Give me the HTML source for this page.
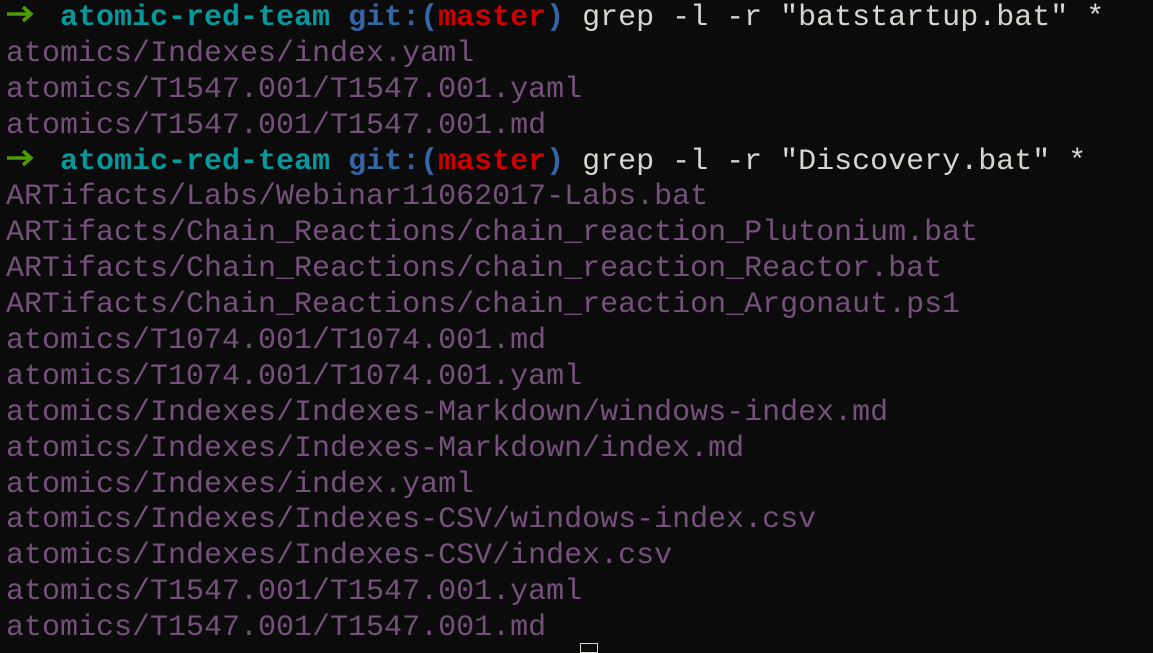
<!DOCTYPE html>
<html><head><meta charset="utf-8"><style>
html,body{margin:0;padding:0;background:#0b0b0b;width:1153px;height:649px;overflow:hidden}
.t{position:absolute;left:6px;top:1px;font-family:"Liberation Mono","DejaVu Sans Mono",monospace;font-size:30px;color:#d3d7cf}
.t div{height:35.9px;line-height:35.9px;white-space:pre;overflow:visible}
.c{color:#06989a;font-weight:bold}.b{color:#3465a4;font-weight:bold}.r{color:#cc0000;font-weight:bold}.p{color:#75507b}
.ar{display:inline-block;width:54px;height:20px;vertical-align:middle;position:relative;top:-3px}
.cur{position:absolute;left:580px;top:643px;width:18px;height:10px;border:1px solid #d3d7cf;box-sizing:border-box}
</style></head><body>
<div class="t">
<div><svg class="ar" viewBox="0 0 54 20"><path d="M1 10H24M17 3L25 10L17 17" stroke="#4e9a06" stroke-width="3.5" fill="none"/></svg><span class="c">atomic-red-team</span> <span class="b">git:(</span><span class="r">master</span><span class="b">)</span> grep -l -r "batstartup.bat" *</div>
<div class="p">atomics/Indexes/index.yaml</div>
<div class="p">atomics/T1547.001/T1547.001.yaml</div>
<div class="p">atomics/T1547.001/T1547.001.md</div>
<div><svg class="ar" viewBox="0 0 54 20"><path d="M1 10H24M17 3L25 10L17 17" stroke="#4e9a06" stroke-width="3.5" fill="none"/></svg><span class="c">atomic-red-team</span> <span class="b">git:(</span><span class="r">master</span><span class="b">)</span> grep -l -r "Discovery.bat" *</div>
<div class="p">ARTifacts/Labs/Webinar11062017-Labs.bat</div>
<div class="p">ARTifacts/Chain_Reactions/chain_reaction_Plutonium.bat</div>
<div class="p">ARTifacts/Chain_Reactions/chain_reaction_Reactor.bat</div>
<div class="p">ARTifacts/Chain_Reactions/chain_reaction_Argonaut.ps1</div>
<div class="p">atomics/T1074.001/T1074.001.md</div>
<div class="p">atomics/T1074.001/T1074.001.yaml</div>
<div class="p">atomics/Indexes/Indexes-Markdown/windows-index.md</div>
<div class="p">atomics/Indexes/Indexes-Markdown/index.md</div>
<div class="p">atomics/Indexes/index.yaml</div>
<div class="p">atomics/Indexes/Indexes-CSV/windows-index.csv</div>
<div class="p">atomics/Indexes/Indexes-CSV/index.csv</div>
<div class="p">atomics/T1547.001/T1547.001.yaml</div>
<div class="p">atomics/T1547.001/T1547.001.md</div>
</div>
<div class="cur"></div>
</body></html>
